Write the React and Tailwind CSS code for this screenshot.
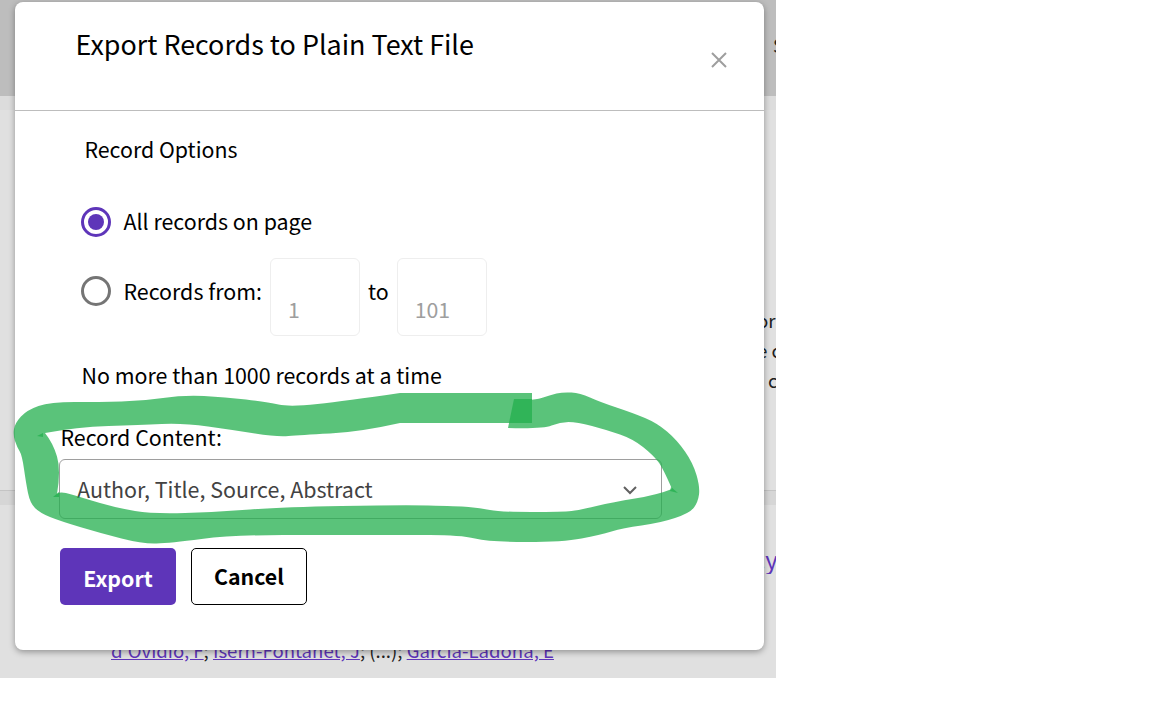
import React from 'react';

const FONT = 'font-["Noto_Sans_CJK_SC","Noto_Sans",sans-serif]';

// hand-drawn highlight, traced in page coordinates. each run is smoothed, the ends of a run stay sharp
const runs = [
  [[400, 393], [345, 401], [290, 407], [267, 402], [225, 397], [183, 395], [143, 401], [100, 402], [50, 402],
    [27, 410], [15, 423], [13, 435], [17, 447], [22, 455], [26, 483], [30, 503], [40, 513], [60, 521], [100, 533],
    [143, 544], [170, 543], [233, 535], [333, 535], [400, 535], [460, 535], [490, 542], [563, 542], [600, 535], [623, 528],
    [660, 523], [690, 513], [698, 502], [700, 487], [693, 463], [677, 440], [657, 423], [633, 413], [600, 402], [580, 393],
    [563, 392], [550, 395], [533, 401], [514, 399]],
  [[508, 428], [543, 429], [560, 422], [577, 422], [607, 430], [633, 439], [653, 455], [663, 468], [672, 489]],
  [[672, 489], [657, 495], [613, 502], [580, 510], [563, 512], [500, 512], [480, 508], [457, 506], [400, 505], [283, 507],
    [217, 512], [153, 514], [117, 508], [83, 498], [60, 491], [57, 494]],
  [[57, 494], [61, 470], [53, 443], [45, 433]],
  [[45, 433], [77, 427], [140, 425], [183, 423], [233, 430], [277, 437], [300, 435], [360, 432], [400, 423]],
];

function smooth(points) {
  let d = `L${points[0][0]} ${points[0][1]}`;
  for (let i = 1; i < points.length - 1; i++) {
    const [x, y] = points[i];
    const [nx, ny] = points[i + 1];
    const end = i === points.length - 2 ? [nx, ny] : [(x + nx) / 2, (y + ny) / 2];
    d += `Q${x} ${y} ${end[0]} ${end[1]}`;
  }
  return d;
}

const ringPath = 'M532 393' + runs.map(smooth).join('') + 'L532 423Z';

function Highlight() {
  return (
    <svg className="absolute inset-0 pointer-events-none" width="776" height="678" viewBox="0 0 776 678">
      <path d={ringPath} fill="#23af4e" fillOpacity="0.75" />
      <path d="M514 399L532 399L532 423L509 423Z" fill="#23af4e" fillOpacity="0.75" />
      <path d="M671 487L678 493L670 491ZM53 497L59 492L59 497ZM37 436L43 433L43 437Z" fill="#23af4e" fillOpacity="0.75" />
    </svg>
  );
}

function Radio({ checked }) {
  return (
    <span className={`flex h-[30px] w-[30px] shrink-0 items-center justify-center rounded-full border-[3px] bg-white ${checked ? 'border-[#5e35b9]' : 'border-[#757575]'}`}>
      {checked && <span className="h-[16px] w-[16px] rounded-full bg-[#5e35b9]" />}
    </span>
  );
}

function NumberBox({ value }) {
  return (
    <div className="flex h-[78px] w-[90px] items-end rounded-[6px] border border-[#eeeeee] pb-[13px] pl-[17px] text-[21.33px] leading-[26px] text-[#9e9e9e]">
      {value}
    </div>
  );
}

export default function App() {
  return (
    <div className={`${FONT} relative h-[678px] w-[776px] overflow-hidden bg-[#e0e0e0] text-[#212121]`}>
      {/* page behind the dialog */}
      <div className="h-[96px] overflow-hidden bg-[#bdbdbd] pt-[32px] text-[18.67px] leading-[26px]">
        <div className="ml-[773px] w-[3px] overflow-hidden">S</div>
      </div>
      <div className="h-[14px] bg-[#dcdcdc]" />
      <div className="pt-[195px] text-[18.67px] leading-[30px]">
        <div className="ml-[757px] w-[19px] overflow-hidden">or</div>
        <div className="ml-[757px] w-[19px] overflow-hidden whitespace-nowrap">e c</div>
        <div className="ml-[768px] w-[8px] overflow-hidden">c</div>
      </div>
      <div className="mt-[95px] h-[15px] border-t border-[#c4c4c4] bg-[#d6d6d6]" />
      <div className="pt-[39px] pl-[759px] text-[24px] leading-[30px] text-[#5e35b9]">
        <div className="w-[17px] overflow-hidden whitespace-nowrap">.y</div>
      </div>
      <div className="mt-[64px] pl-[111px] text-[18.6px] leading-[24px] whitespace-nowrap">
        <span className="text-[#5e35b9] underline">d'Ovidio, F</span>; <span className="text-[#5e35b9] underline">Isern-Fontanet, J</span>; (...); <span className="text-[#5e35b9] underline">García-Ladoña, E</span>
      </div>

      {/* dialog */}
      <div className="absolute top-[2px] left-[15px] h-[648px] w-[749px] rounded-[8px] bg-white text-black shadow-[0_2px_6px_rgba(0,0,0,0.35)]">
        <div className="relative h-[109px] border-b border-[#bdbdbd] pt-[23px] pl-[60.5px]">
          <h2 className="text-[26.9px] leading-[38px] font-normal">Export Records to Plain Text File</h2>
          <svg className="absolute top-[50px] right-[37px]" width="16" height="16" viewBox="0 0 16 16" fill="none" stroke="#9e9e9e" strokeWidth="2">
            <path d="M1 1L15 15M15 1L1 15" />
          </svg>
        </div>

        <div className="pt-[23px] pl-[69.5px] text-[21.33px] leading-[30px]">Record Options</div>

        <div className="mt-[42px] flex items-center gap-[12.5px] pl-[66px] text-[21.4px] leading-[30px]">
          <Radio checked />
          <span className="pb-[1px]">All records on page</span>
        </div>

        <div className="mt-[21px] flex items-start pl-[66px] text-[21.4px] leading-[30px]">
          <span className="mt-[18px]">
            <Radio />
          </span>
          <span className="mt-[18px] mr-[8px] ml-[12.5px]">Records from:</span>
          <NumberBox value="1" />
          <span className="mx-[8px] mt-[18px]">to</span>
          <NumberBox value="101" />
        </div>

        <div className="mt-[24px] pl-[66.5px] text-[21.4px] leading-[30px]">No more than 1000 records at a time</div>

        <div className="mt-[32px] pl-[45.5px] text-[21.4px] leading-[30px]">Record Content:</div>

        <div className="mt-[7px] ml-[44px] flex h-[60px] w-[603px] items-center justify-between rounded-[6px] border border-[#9e9e9e] pr-[24px] pl-[17px] text-[21.45px] text-[#424242]">
          <span>Author, Title, Source, Abstract</span>
          <svg className="mt-[2px]" width="14" height="9" viewBox="0 0 14 9" fill="none" stroke="#616161" strokeWidth="2">
            <path d="M1 1L7 7L13 1" />
          </svg>
        </div>

        <div className="mt-[29px] ml-[45px] flex gap-[15px]">
          <button className="h-[57px] w-[116px] rounded-[5px] bg-[#5e35b9] pt-[3px] text-[21.33px] leading-[30px] font-bold text-white">Export</button>
          <button className="h-[57px] w-[116px] rounded-[5px] border border-black bg-white pb-[2px] text-[21.33px] leading-[30px] font-bold text-black">Cancel</button>
        </div>
      </div>

      <Highlight />
    </div>
  );
}
